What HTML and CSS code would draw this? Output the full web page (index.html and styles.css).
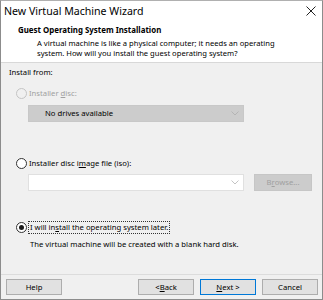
FILE: index.html
```html
<!DOCTYPE html>
<html lang="en">
<head>
    <meta charset="UTF-8">
    <title>New Virtual Machine Wizard</title>
    <link rel="stylesheet" href="styles.css">
</head>
<body>

<div class="window">
    <div class="titlebar">
        <div class="titlebar-text">New Virtual Machine Wizard</div>
        <svg class="close-icon" width="10" height="10" viewBox="0 0 10 10">
            <path d="M0.5 0.5 L9.5 9.5 M9.5 0.5 L0.5 9.5" stroke="#222" stroke-width="1" fill="none"/>
        </svg>
    </div>

    <div class="header">
        <div class="header-title">Guest Operating System Installation</div>
        <div class="header-desc">A virtual machine is like a physical computer; it needs an operating<br>system. How will you install the guest operating system?</div>
    </div>

    <div class="content">
        <div class="group-label">Install from:</div>

        <div class="radio-row radio-first disabled">
            <span class="radio"></span>
            <span>Installer <u>d</u>isc:</span>
        </div>
        <div class="field-row field-first">
            <div class="combo combo-disabled">
                <span>No drives available</span>
                <svg class="chevron" width="8" height="5" viewBox="0 0 8 5"><path d="M0.5 0.5 L4 4 L7.5 0.5" stroke="#b4b4b4" fill="none"/></svg>
            </div>
        </div>

        <div class="radio-row radio-second">
            <span class="radio"></span>
            <span>Installer disc i<u>m</u>age file (iso):</span>
        </div>
        <div class="field-row field-second">
            <div class="combo combo-empty">
                <span></span>
                <svg class="chevron" width="8" height="5" viewBox="0 0 8 5"><path d="M0.5 0.5 L4 4 L7.5 0.5" stroke="#c4c4c4" fill="none"/></svg>
            </div>
            <div class="btn btn-disabled">B<u>r</u>owse...</div>
        </div>

        <div class="radio-row radio-third">
            <span class="radio checked"></span>
            <span class="focus-label">I will in<u>s</u>tall the operating system later.</span>
        </div>
        <div class="note">The virtual machine will be created with a blank hard disk.</div>
    </div>

    <div class="footer">
        <div class="btn">Help</div>
        <div class="footer-right">
            <div class="btn">&lt; <u>B</u>ack</div>
            <div class="btn btn-default"><u>N</u>ext &gt;</div>
            <div class="btn">Cancel</div>
        </div>
    </div>
</div>

</body>
</html>
```

FILE: styles.css
```css
:root {
    --win-bg: #f0f0f0;
    --win-border: #8c8c8c;
    --text: #000000;
    --text-disabled: #a0a0a0;
    --btn-bg: #e1e1e1;
    --btn-border: #adadad;
    --accent: #0078d7;
}

* {
    box-sizing: border-box;
    margin: 0;
    padding: 0;
}

body {
    font-family: "Noto Sans", "Open Sans", sans-serif;
    font-size: 7.7px;
    line-height: 11px;
    color: var(--text);
    background-color: #ffffff;
}

u {
    text-decoration: underline;
    text-underline-offset: 1px;
}

.window {
    width: 323px;
    height: 300px;
    display: flex;
    flex-direction: column;
    border: 1px solid var(--win-border);
    border-top-color: #b0b0b0;
    background-color: var(--win-bg);
}

.titlebar {
    height: 20px;
    flex: none;
    display: flex;
    align-items: center;
    justify-content: space-between;
    padding: 0 6px 0 3px;
    background-color: #ffffff;
    font-size: 10.6px;
}

.header {
    height: 42px;
    flex: none;
    background-color: #ffffff;
    border-bottom: 1px solid #d8d8d8;
    padding: 4px 0 0 17px;
}

.header-title {
    font-size: 7.9px;
    font-weight: bold;
    height: 13px;
}

.header-desc {
    padding-left: 19px;
    font-size: 7.6px;
    line-height: 10px;
}

.content {
    flex: 1;
    padding: 4px 0 0 8px;
}

.group-label {
    height: 11px;
}

.radio-row {
    display: flex;
    align-items: center;
    gap: 2px;
    height: 11px;
    padding-left: 7px;
}

.radio-first {
    margin-top: 10px;
}

.radio-second {
    margin-top: 36px;
}

.radio-third {
    margin-top: 31px;
}

.radio {
    width: 11px;
    height: 11px;
    flex: none;
    border: 1px solid #333333;
    border-radius: 50%;
    background-color: #ffffff;
    display: flex;
    align-items: center;
    justify-content: center;
}

.radio.checked::after {
    content: "";
    width: 5px;
    height: 5px;
    border-radius: 50%;
    background-color: #1a1a1a;
}

.disabled {
    color: var(--text-disabled);
}

.disabled .radio {
    border-color: #c4c4c4;
    background-color: var(--win-bg);
}

.focus-label {
    outline: 1px dotted #333333;
    outline-offset: 0;
    padding: 0 1px;
}

.field-row {
    display: flex;
    gap: 10px;
    padding-left: 19px;
}

.field-first {
    margin-top: 6px;
}

.field-second {
    margin-top: 5px;
}

.combo {
    width: 216px;
    height: 17px;
    display: flex;
    align-items: center;
    justify-content: space-between;
    padding: 0 4px 0 16px;
}

.combo-disabled {
    background-color: #cccccc;
    border: 1px solid #c8c8c8;
}

.combo-empty {
    background-color: #ffffff;
    border: 1px solid #e0e0e0;
}

.note {
    margin-top: 6px;
    padding-left: 21px;
    height: 11px;
}

.footer {
    height: 21px;
    flex: none;
    margin-bottom: 4px;
    border-top: 1px solid #dcdcdc;
    display: flex;
    align-items: flex-end;
    justify-content: space-between;
    padding: 0 4px 0 5px;
}

.footer-right {
    display: flex;
    gap: 6px;
}

.btn {
    width: 56px;
    height: 16px;
    display: flex;
    align-items: center;
    justify-content: center;
    background-color: var(--btn-bg);
    border: 1px solid var(--btn-border);
}

.btn-default {
    border-color: var(--accent);
}

.btn-disabled {
    width: 58px;
    height: 17px;
    background-color: #cccccc;
    border-color: #c6c6c6;
    color: var(--text-disabled);
}
```
